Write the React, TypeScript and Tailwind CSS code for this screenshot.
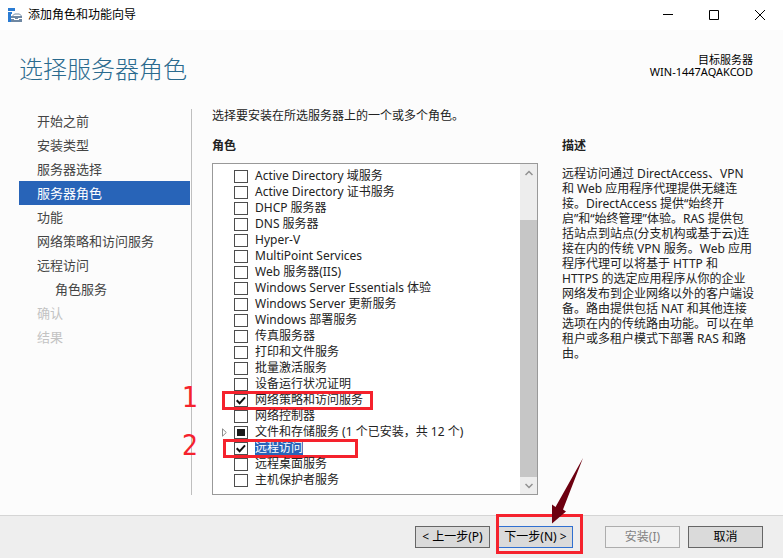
import { useEffect, useRef } from "react";

type Step = { label: string; state?: "current" | "disabled"; nested?: boolean };

const steps: Step[] = [
  { label: "开始之前" },
  { label: "安装类型" },
  { label: "服务器选择" },
  { label: "服务器角色", state: "current" },
  { label: "功能" },
  { label: "网络策略和访问服务" },
  { label: "远程访问" },
  { label: "角色服务", nested: true },
  { label: "确认", state: "disabled" },
  { label: "结果", state: "disabled" },
];

type Role = {
  label: string;
  checked?: boolean;
  partial?: boolean;
  selected?: boolean;
  mark?: "1" | "2";
};

const roles: Role[] = [
  { label: "Active Directory 域服务" },
  { label: "Active Directory 证书服务" },
  { label: "DHCP 服务器" },
  { label: "DNS 服务器" },
  { label: "Hyper-V" },
  { label: "MultiPoint Services" },
  { label: "Web 服务器(IIS)" },
  { label: "Windows Server Essentials 体验" },
  { label: "Windows Server 更新服务" },
  { label: "Windows 部署服务" },
  { label: "传真服务器" },
  { label: "打印和文件服务" },
  { label: "批量激活服务" },
  { label: "设备运行状况证明" },
  { label: "网络策略和访问服务", checked: true, mark: "1" },
  { label: "网络控制器" },
  { label: "文件和存储服务 (1 个已安装，共 12 个)", partial: true },
  { label: "远程访问", checked: true, selected: true, mark: "2" },
  { label: "远程桌面服务" },
  { label: "主机保护者服务" },
];

const description = [
  "远程访问通过 DirectAccess、VPN",
  "和 Web 应用程序代理提供无缝连",
  "接。DirectAccess 提供“始终开",
  "启”和“始终管理”体验。RAS 提供包",
  "括站点到站点(分支机构或基于云)连",
  "接在内的传统 VPN 服务。Web 应用",
  "程序代理可以将基于 HTTP 和",
  "HTTPS 的选定应用程序从你的企业",
  "网络发布到企业网络以外的客户端设",
  "备。路由提供包括 NAT 和其他连接",
  "选项在内的传统路由功能。可以在单",
  "租户或多租户模式下部署 RAS 和路",
  "由。",
];

function TitleBar() {
  return (
    <header className="flex h-[30px] items-center bg-white pl-2 text-black">
      <svg width="15" height="14" viewBox="0 0 15 14" aria-hidden="true">
        <path d="M0 0h7v3H0zM0 4h4v2H3v8H0z" fill="#2b7cd3" />
        <path d="M5 9V7.500L6.500 6h5L13 7.500V9" fill="none" stroke="#6f88a3" />
        <path d="M3 8h11v2h-4v1H7v-1H3zM3 11h3v1h5v-1h3v3H3z" fill="#6f88a3" />
        <path d="M6 7h5v1H6z" fill="#fff" />
      </svg>
      <span className="ml-[5px] flex-1 text-[12px] leading-4">添加角色和功能向导</span>
      <button aria-label="最小化" className="grid h-[30px] w-[46px] place-items-center">
        <svg width="10" height="10" viewBox="0 0 10 10" stroke="#000">
          <path d="M0 4.500h10" />
        </svg>
      </button>
      <button aria-label="最大化" className="grid h-[30px] w-[46px] place-items-center">
        <svg width="10" height="10" viewBox="0 0 10 10" stroke="#000" fill="none">
          <path d="M.5.5h9v9h-9z" />
        </svg>
      </button>
      <button aria-label="关闭" className="grid h-[30px] w-[46px] place-items-center">
        <svg width="10" height="10" viewBox="0 0 10 10" stroke="#000">
          <path d="M0 0l10 10M10 0L0 10" />
        </svg>
      </button>
    </header>
  );
}

function StepNav() {
  return (
    <nav className="w-[173px] shrink-0 border-r border-[#bfbfbf] pr-px text-[13px] leading-6">
      <ul>
        {steps.map((s) => (
          <li key={s.label}>
            <a
              href="#"
              aria-current={s.state === "current" ? "step" : undefined}
              className={
                "block h-6 " +
                (s.nested ? "pl-9 " : "pl-[18px] ") +
                (s.state === "current"
                  ? "bg-[#2864b8] text-white"
                  : s.state === "disabled"
                    ? "text-[#c3c3c3]"
                    : "text-[#444]")
              }
            >
              {s.label}
            </a>
          </li>
        ))}
      </ul>
    </nav>
  );
}

function RoleRow({ role, index }: { role: Role; index: number }) {
  const box = useRef<HTMLInputElement>(null);
  useEffect(() => {
    if (box.current) box.current.indeterminate = Boolean(role.partial);
  }, [role.partial]);
  const id = `role-${index}`;
  return (
    <li className="relative flex h-4 items-center">
      <span className="w-[21px] shrink-0 pl-[9px]">
        {role.partial && (
          <svg width="5" height="9" viewBox="0 0 5 9" fill="#fff" stroke="#8a8a8a">
            <path d="M.5.8v7.400L4.300 4.500z" />
          </svg>
        )}
      </span>
      <span className="grid shrink-0">
        <input
          ref={box}
          id={id}
          type="checkbox"
          defaultChecked={role.checked}
          className="peer col-start-1 row-start-1 h-[13px] w-[14px] appearance-none border border-[#4d4d4d] bg-white"
        />
        <svg
          viewBox="0 0 14 13"
          className="pointer-events-none invisible col-start-1 row-start-1 h-[13px] w-[14px] peer-checked:visible"
          fill="none"
          stroke="#111"
          strokeWidth="2"
        >
          <path d="M2.700 6.300L5.600 9.300L11 3.300" />
        </svg>
        <span className="pointer-events-none invisible col-start-1 row-start-1 m-[3px] bg-[#1a1a1a] peer-indeterminate:visible" />
      </span>
      <label
        htmlFor={id}
        className={
          "ml-[7px] whitespace-nowrap " + (role.selected ? "bg-[#2864b8] text-white" : "")
        }
      >
        {role.label}
      </label>
      {role.mark === "1" && (
        <>
          <span className="pointer-events-none absolute -top-px left-[9px] h-[19px] w-[151px] border-3 border-[#f5222d]" />
          <Numeral value="1" />
        </>
      )}
      {role.mark === "2" && (
        <>
          <span className="pointer-events-none absolute -top-px left-2.5 h-[19px] w-[135px] border-3 border-[#f5222d]" />
          <Numeral value="2" />
        </>
      )}
    </li>
  );
}

function Numeral({ value }: { value: string }) {
  return (
    <span className="pointer-events-none absolute -top-2.5 -left-8 w-[18px] text-center font-['DejaVu_Sans_Condensed','DejaVu_Sans',sans-serif] text-[28px] leading-8 text-[#f5222d]">
      {value}
    </span>
  );
}

function ScrollBar() {
  return (
    <div className="flex w-[17px] shrink-0 flex-col bg-[#ededed]">
      <button aria-label="向上滚动" className="grid h-[17px] place-items-center">
        <svg width="8" height="6" viewBox="0 0 8 6" fill="none" stroke="#909090" strokeWidth="1.500">
          <path d="M.5 5L4 1.500 7.500 5" />
        </svg>
      </button>
      <div className="mt-[39px] flex-1 bg-[#c6c6c6]" />
      <button aria-label="向下滚动" className="grid h-[17px] place-items-center">
        <svg width="8" height="6" viewBox="0 0 8 6" fill="none" stroke="#909090" strokeWidth="1.500">
          <path d="M.5 1L4 4.500 7.500 1" />
        </svg>
      </button>
    </div>
  );
}

const buttonBase = "h-[22px] w-[75px] whitespace-nowrap border text-[12px] leading-5 ";

function Footer() {
  return (
    <footer className="flex flex-1 items-start justify-end border-t border-[#d5d5d5] bg-[#eee] pt-2.5 pr-5 text-black">
      <button className={buttonBase + "border-[#666] bg-[#dadada]"}>&lt; 上一步(P)</button>
      <div className="relative ml-2">
        <button className={buttonBase + "border-[#2f6fd0] bg-[#dadada]"}>下一步(N) &gt;</button>
        <span className="pointer-events-none absolute -top-3 -left-0.5 h-10 w-[87px] border-3 border-[#f5222d]" />
        <svg
          className="pointer-events-none absolute bottom-6 left-[53px]"
          width="34"
          height="67"
          viewBox="0 0 34 67"
          fill="#6d0010"
        >
          <path d="M32 1L4.500 50 1 47.500V66.500L15 54.500l-3-2z" />
        </svg>
      </div>
      <button disabled className={buttonBase + "ml-8 border-[#adadad] bg-[#f1f1f1] text-[#838383]"}>
        安装(I)
      </button>
      <button className={buttonBase + "ml-2 border-[#666] bg-[#dadada]"}>取消</button>
    </footer>
  );
}

export default function App() {
  return (
    <div className="flex min-h-screen flex-col bg-[#fcfcfc] font-['Noto_Sans','Noto_Sans_CJK_SC',sans-serif] text-[12px] leading-4 text-[#222]">
      <TitleBar />
      <div className="flex h-[79px] items-start justify-between pr-[30px] pl-[19px]">
        <h1 className="pt-[23px] text-[24px] leading-8 font-light text-[#2a6a8e]">选择服务器角色</h1>
        <div className="pt-6 text-right text-[11px] leading-3 text-black">
          <p>目标服务器</p>
          <p>WIN-1447AQAKCOD</p>
        </div>
      </div>
      <main className="flex pr-5 pb-5 pl-[19px]">
        <StepNav />
        <section className="ml-5 min-w-0 flex-1">
          <p className="-mt-px">选择要安装在所选服务器上的一个或多个角色。</p>
          <h2 className="mt-3.5 font-bold">角色</h2>
          <div className="mt-[9px] flex border border-[#999] bg-white">
            <ul className="min-w-0 flex-1 pt-1 pb-1.5">
              {roles.map((r, i) => (
                <RoleRow key={r.label} role={r} index={i} />
              ))}
            </ul>
            <ScrollBar />
          </div>
        </section>
        <aside className="ml-6 w-[201px] shrink-0 pt-[29px]">
          <h2 className="font-bold">描述</h2>
          <p className="mt-3 leading-[15px] whitespace-nowrap">
            {description.map((line) => (
              <span key={line} className="block">
                {line}
              </span>
            ))}
          </p>
        </aside>
      </main>
      <Footer />
    </div>
  );
}
